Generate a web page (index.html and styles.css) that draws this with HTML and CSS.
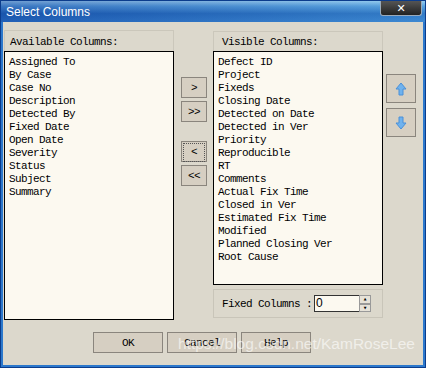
FILE: index.html
```html
<!DOCTYPE html>
<html lang="en">
<head>
  <meta charset="utf-8">
  <title>Select Columns</title>
<link rel="stylesheet" href="styles.css">
</head>
<body>
  <div class="window">
    <div class="titlebar">
      <span class="title">Select Columns</span>
      <button class="close">&#x2715;</button>
    </div>
    <div class="client">
      <div class="columns">
        <div class="pane">
          <div class="caption">Available Columns:</div>
          <ul class="list list-tall">
            <li>Assigned To</li>
            <li>By Case</li>
            <li>Case No</li>
            <li>Description</li>
            <li>Detected By</li>
            <li>Fixed Date</li>
            <li>Open Date</li>
            <li>Severity</li>
            <li>Status</li>
            <li>Subject</li>
            <li>Summary</li>
          </ul>
        </div>
        <div class="movers">
          <button class="btn mv mv-first">&gt;</button>
          <button class="btn mv">&gt;&gt;</button>
          <button class="btn mv mv-gap focused"><span>&lt;</span></button>
          <button class="btn mv">&lt;&lt;</button>
        </div>
        <div class="pane">
          <div class="caption caption-right">Visible Columns:</div>
          <ul class="list list-short">
            <li>Defect ID</li>
            <li>Project</li>
            <li>Fixeds</li>
            <li>Closing Date</li>
            <li>Detected on Date</li>
            <li>Detected in Ver</li>
            <li>Priority</li>
            <li>Reproducible</li>
            <li>RT</li>
            <li>Comments</li>
            <li>Actual Fix Time</li>
            <li>Closed in Ver</li>
            <li>Estimated Fix Time</li>
            <li>Modified</li>
            <li>Planned Closing Ver</li>
            <li>Root Cause</li>
          </ul>
          <div class="fixed">
            <span class="fixed-label">Fixed Columns :</span>
            <span class="field">0</span>
            <span class="spin">
              <span class="spin-btn">&#9652;</span>
              <span class="spin-btn">&#9662;</span>
            </span>
          </div>
        </div>
        <div class="order">
          <button class="btn arrow">
            <svg width="12" height="14" viewBox="0 0 12 14"><path d="M6 1 L11 7 L8 7 L8 13 L4 13 L4 7 L1 7 Z" fill="#6fb2ee" stroke="#4a90d8" stroke-width="1"/></svg>
          </button>
          <button class="btn arrow">
            <svg width="12" height="14" viewBox="0 0 12 14"><path d="M6 13 L11 7 L8 7 L8 1 L4 1 L4 7 L1 7 Z" fill="#6fb2ee" stroke="#4a90d8" stroke-width="1"/></svg>
          </button>
        </div>
      </div>
      <div class="actions">
        <button class="btn act">OK</button>
        <button class="btn act">Cancel</button>
        <button class="btn act">Help</button>
      </div>
      <div class="watermark">https://blog.csdn.net/KamRoseLee</div>
    </div>
  </div>
</body>
</html>
```

FILE: styles.css
```css
body {
  margin: 0;
  font-family: "Liberation Mono", "DejaVu Sans Mono", monospace;
  font-size: 11px;
  letter-spacing: -0.6px;
  color: #000;
}
.window {
  width: 426px;
  height: 368px;
  box-sizing: border-box;
  background: #2c78cc;
  border: 1px solid #0b3c8c;
  display: flex;
  flex-direction: column;
}
.titlebar {
  height: 21px;
  display: flex;
  align-items: flex-start;
  justify-content: space-between;
  background:
    linear-gradient(to right, rgba(20, 60, 150, 0.35), rgba(120, 200, 240, 0.25)),
    linear-gradient(to bottom, #9fd0f0 0%, #4f96d8 25%, #1c62b8 60%, #2a74c8 100%);
}
.title {
  font-family: "Liberation Sans", Arial, sans-serif;
  font-size: 12px;
  letter-spacing: 0;
  color: #fff;
  padding: 4px 0 0 5px;
}
.close {
  width: 42px;
  height: 15px;
  margin: 0 3px 0 0;
  padding: 0;
  border: 1px solid #9ab;
  border-top: none;
  border-radius: 0 0 3px 3px;
  background: linear-gradient(#555, #222);
  color: #fff;
  font-family: "DejaVu Sans", sans-serif;
  font-weight: bold;
  font-size: 11px;
  line-height: 13px;
}
.client {
  position: relative;
  flex: 1;
  margin: 0 2px 2px;
  background: #dcd8cc;
  padding: 8px 0 0 1px;
}
.columns {
  display: flex;
  align-items: flex-start;
}
.pane {
  width: 170px;
  display: flex;
  flex-direction: column;
}
.caption {
  height: 21px;
  box-sizing: border-box;
  border: 1px solid #cbc7bb;
  border-bottom: none;
  padding: 5px 0 0 5px;
  line-height: 13px;
}
.caption-right {
  margin-top: 1px;
  height: 20px;
  padding: 4px 0 0 8px;
}
.list {
  margin: 0;
  padding: 4px 0 0 4px;
  list-style: none;
  background: #fcf9f0;
  border: 1px solid #000;
  box-sizing: border-box;
  line-height: 13px;
}
.list-tall {
  height: 269px;
}
.list-short {
  height: 234px;
}
.movers {
  width: 26px;
  margin: 47px 6px 0 7px;
  display: flex;
  flex-direction: column;
  gap: 3px;
}
.btn {
  font: inherit;
  letter-spacing: inherit;
  background: #d6cfc2;
  border: 1px solid #8a857d;
  padding: 0;
  color: #000;
}
.mv {
  height: 21px;
}
.mv-gap {
  margin-top: 16px;
}
.focused span {
  display: block;
  margin: 1px;
  height: 17px;
  line-height: 17px;
  border: 1px dotted #555;
}
.fixed {
  margin-top: 4px;
  height: 29px;
  box-sizing: border-box;
  border: 1px solid #c9c5b9;
  display: flex;
  align-items: center;
  padding-left: 8px;
}
.fixed-label {
  width: 92px;
}
.field {
  width: 45px;
  height: 17px;
  box-sizing: border-box;
  background: #fcf9f0;
  border: 1px solid #333;
  border-right: none;
  font-family: "Liberation Sans", Arial, sans-serif;
  font-size: 12px;
  letter-spacing: 0;
  line-height: 15px;
  padding-left: 1px;
}
.spin {
  width: 12px;
  height: 17px;
  display: flex;
  flex-direction: column;
}
.spin-btn {
  flex: 1;
  background: #e6e2d8;
  border: 1px solid #999;
  font-size: 7px;
  line-height: 6px;
  text-align: center;
  letter-spacing: 0;
}
.order {
  margin: 44px 0 0 3px;
  width: 30px;
  display: flex;
  flex-direction: column;
  gap: 5px;
}
.arrow {
  height: 29px;
  display: flex;
  align-items: center;
  justify-content: center;
}
.actions {
  display: flex;
  gap: 4px;
  margin: 12px 0 0 89px;
}
.act {
  width: 70px;
  height: 21px;
}
.watermark {
  position: absolute;
  left: 175px;
  top: 313px;
  font-family: "Liberation Sans", Arial, sans-serif;
  font-size: 15.5px;
  letter-spacing: 0;
  color: rgba(255, 255, 255, 0.6);
  pointer-events: none;
}
```
